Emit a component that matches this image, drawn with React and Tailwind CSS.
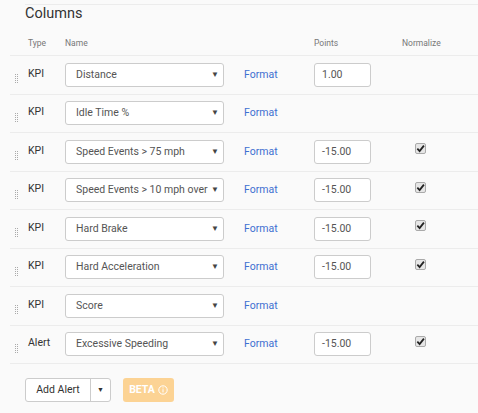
import React from 'react';

const rows = [
  { type: 'KPI', name: 'Distance', points: '1.00', normalize: false },
  { type: 'KPI', name: 'Idle Time %', points: null, normalize: false },
  { type: 'KPI', name: 'Speed Events > 75 mph', points: '-15.00', normalize: true },
  { type: 'KPI', name: 'Speed Events > 10 mph over Posted', points: '-15.00', normalize: true },
  { type: 'KPI', name: 'Hard Brake', points: '-15.00', normalize: true },
  { type: 'KPI', name: 'Hard Acceleration', points: '-15.00', normalize: true },
  { type: 'KPI', name: 'Score', points: null, normalize: false },
  { type: 'Alert', name: 'Excessive Speeding', points: '-15.00', normalize: true },
];

const Grip = () => (
  <div className="flex gap-[1px] mt-[8px] ml-[5px]">
    <span className="w-[1px] h-[9px] border-l border-dotted border-[#aaa]" />
    <span className="w-[1px] h-[9px] border-l border-dotted border-[#aaa]" />
  </div>
);

const Check = () => (
  <span className="ml-[13px] w-[11px] h-[11px] rounded-[2px] border border-[#aaa] bg-[#e6e6e6] flex items-center justify-center">
    <svg width="9" height="9" viewBox="0 0 10 10">
      <path d="M1.5 5.2 L4 7.8 L8.8 1.8" fill="none" stroke="#222" strokeWidth="2" />
    </svg>
  </span>
);

export default function App() {
  return (
    <div className="w-[478px] h-[413px] bg-[#fafafa] overflow-hidden text-[#333]" style={{ fontFamily: 'Roboto, "Liberation Sans", Arial, sans-serif' }}>
      <div className="pt-[4px]">
        <div className="ml-[25px] border-t border-[#ececec]">
          <h2 className="text-[14.5px] leading-[15px] pt-[1px] text-[#333]">Columns</h2>
        </div>
        <div className="ml-[10px] mt-[11px]">
          <div className="grid grid-cols-[18px_37px_179px_70px_88px_1fr] h-[24px] items-center text-[8.5px] text-[#777] border-b border-[#ececec]">
            <span />
            <span>Type</span>
            <span>Name</span>
            <span />
            <span>Points</span>
            <span>Normalize</span>
          </div>
          {rows.map((r) => (
            <div key={r.name} className="grid grid-cols-[18px_37px_179px_70px_88px_1fr] h-[38.5px] items-center border-b border-[#ececec] text-[10.5px]">
              <Grip />
              <span className="text-[#333] -mt-[2px]">{r.type}</span>
              <div className="w-[159px] h-[24px] bg-white border border-[#ccc] rounded-[3px] flex items-center pl-[10px] pr-[4px] text-[#555] overflow-hidden">
                <span className="flex-1 min-w-0 whitespace-nowrap overflow-hidden">{r.name}</span>
                <span className="text-[8px] text-[#444] pl-[2px] bg-white">▼</span>
              </div>
              <span className="text-[#3e6fd1]">Format</span>
              <div>
                {r.points && (
                  <div className="w-[57px] h-[24px] bg-white border border-[#ccc] rounded-[3px] flex items-center pl-[7px] text-[#555]">
                    {r.points}
                  </div>
                )}
              </div>
              <div className="-mt-[6px]">{r.normalize && <Check />}</div>
            </div>
          ))}
        </div>
        <div className="ml-[25px] mt-[14px] flex items-center gap-[12px]">
          <div className="flex h-[24px] bg-white border border-[#ccc] rounded-[3px] text-[10.5px] text-[#333]">
            <span className="w-[65px] flex items-center justify-center border-r border-[#ccc]">Add Alert</span>
            <span className="w-[19px] flex items-center justify-center text-[7px]">▼</span>
          </div>
          <div className="h-[24px] w-[51px] rounded-[3px] bg-[#fcd394] text-white text-[10.5px] font-bold flex items-center justify-center gap-[3px]">
            BETA
            <svg width="10" height="10" viewBox="0 0 10 10">
              <circle cx="5" cy="5" r="4.2" fill="none" stroke="white" strokeWidth="1" />
              <rect x="4.5" y="4.2" width="1" height="3.2" fill="white" />
              <rect x="4.5" y="2.4" width="1" height="1" fill="white" />
            </svg>
          </div>
        </div>
      </div>
    </div>
  );
}
